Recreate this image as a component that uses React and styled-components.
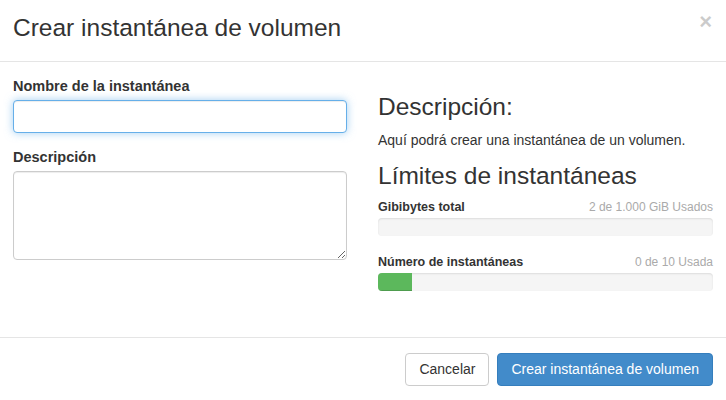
import styled, { createGlobalStyle } from 'styled-components';

const GlobalStyle = createGlobalStyle`
  html, body {
    margin: 0;
    padding: 0;
    background: #fff;
  }
  body {
    font-family: "Liberation Sans", Arial, sans-serif;
    font-size: 14px;
    line-height: 20px;
    color: #333;
  }
  * { box-sizing: border-box; }
`;

const Modal = styled.div`
  width: 726px;
  height: 400px;
  background: #fff;
  display: flex;
  flex-direction: column;
`;

const Header = styled.div`
  height: 62px;
  padding: 15px 13px 0 13px;
  border-bottom: 1px solid #e5e5e5;
  display: flex;
  justify-content: space-between;
  align-items: flex-start;
`;

const Title = styled.h4`
  margin: 0;
  font-size: 24.5px;
  line-height: 26px;
  font-weight: normal;
  color: #333;
`;

const Close = styled.button`
  border: 0;
  background: transparent;
  padding: 0;
  margin-top: -4px;
  margin-right: 1px;
  font-family: "Liberation Sans", Arial, sans-serif;
  font-size: 22px;
  font-weight: bold;
  line-height: 1;
  color: #000;
  opacity: 0.2;
  text-shadow: 0 1px 0 #fff;
  cursor: pointer;
`;

const Body = styled.div`
  flex: 1;
  padding: 12px 13px 0 13px;
  display: grid;
  grid-template-columns: 334px 335px;
  column-gap: 31px;
  align-items: start;
`;

const Column = styled.div`
  display: flex;
  flex-direction: column;
`;

const Label = styled.label`
  display: block;
  font-weight: bold;
  font-size: 14.5px;
  line-height: 20px;
  margin-top: ${p => p.$top || 0}px;
  margin-bottom: 4px;
`;

const Input = styled.input`
  display: block;
  width: 100%;
  height: 33px;
  padding: 6px 12px;
  font: inherit;
  color: #555;
  border: 1px solid #66afe9;
  border-radius: 4px;
  outline: 0;
  box-shadow: inset 0 1px 1px rgba(0, 0, 0, 0.075), 0 0 8px rgba(102, 175, 233, 0.6);
`;

const TextArea = styled.textarea`
  display: block;
  width: 100%;
  height: 89px;
  padding: 6px 12px;
  font: inherit;
  color: #555;
  border: 1px solid #ccc;
  border-radius: 4px;
  outline: 0;
  box-shadow: inset 0 1px 1px rgba(0, 0, 0, 0.075);
  resize: vertical;
`;

const Heading = styled.h3`
  margin: ${p => p.$top}px 0 0 0;
  font-size: 24.5px;
  line-height: 26px;
  font-weight: normal;
  color: #333;
`;

const Text = styled.p`
  margin: 10px 0 0 0;
`;

const QuotaRow = styled.div`
  margin-top: ${p => p.$top}px;
  display: flex;
  justify-content: space-between;
  align-items: baseline;
  font-size: 12.5px;
  line-height: 17px;
`;

const QuotaName = styled.strong`
  font-weight: bold;
  color: #333;
`;

const QuotaUsed = styled.span`
  font-size: 12px;
  color: #aaa;
`;

const Bar = styled.div`
  margin-top: 2px;
  height: 18px;
  background: #f5f5f5;
  border-radius: 4px;
  box-shadow: inset 0 1px 2px rgba(0, 0, 0, 0.1);
  overflow: hidden;
`;

const Fill = styled.div`
  height: 100%;
  background: #5cb85c;
  box-shadow: inset 0 -1px 0 rgba(0, 0, 0, 0.15);
`;

const Footer = styled.div`
  height: 63px;
  border-top: 1px solid #e5e5e5;
  padding: 15px 13px 0 13px;
  display: flex;
  justify-content: flex-end;
  align-items: flex-start;
  gap: 8px;
`;

const Button = styled.button`
  height: 33px;
  padding: 0 13px;
  font-family: "Liberation Sans", Arial, sans-serif;
  font-size: 14px;
  line-height: 31px;
  border-radius: 4px;
  border: 1px solid ${p => (p.$primary ? '#357ebd' : '#ccc')};
  background: ${p => (p.$primary ? '#428bca' : '#fff')};
  color: ${p => (p.$primary ? '#fff' : '#333')};
  cursor: pointer;
`;

const quotas = [
  { name: 'Gibibytes total', used: '2 de 1.000 GiB Usados', pct: 0, top: 10 },
  { name: 'Número de instantáneas', used: '0 de 10 Usada', pct: 10, top: 18 },
];

export default function App() {
  return (
    <>
      <GlobalStyle />
      <Modal>
        <Header>
          <Title>Crear instantánea de volumen</Title>
          <Close aria-label="Cerrar">×</Close>
        </Header>
        <Body>
          <Column>
            <Label htmlFor="name" $top={2}>Nombre de la instantánea</Label>
            <Input id="name" type="text" />
            <Label htmlFor="desc" $top={14}>Descripción</Label>
            <TextArea id="desc" />
          </Column>
          <Column>
            <Heading $top={20}>Descripción:</Heading>
            <Text>Aquí podrá crear una instantánea de un volumen.</Text>
            <Heading $top={13}>Límites de instantáneas</Heading>
            {quotas.map(q => (
              <div key={q.name}>
                <QuotaRow $top={q.top}>
                  <QuotaName>{q.name}</QuotaName>
                  <QuotaUsed>{q.used}</QuotaUsed>
                </QuotaRow>
                <Bar>
                  <Fill style={{ width: `${q.pct}%` }} />
                </Bar>
              </div>
            ))}
          </Column>
        </Body>
        <Footer>
          <Button>Cancelar</Button>
          <Button $primary>Crear instantánea de volumen</Button>
        </Footer>
      </Modal>
    </>
  );
}
